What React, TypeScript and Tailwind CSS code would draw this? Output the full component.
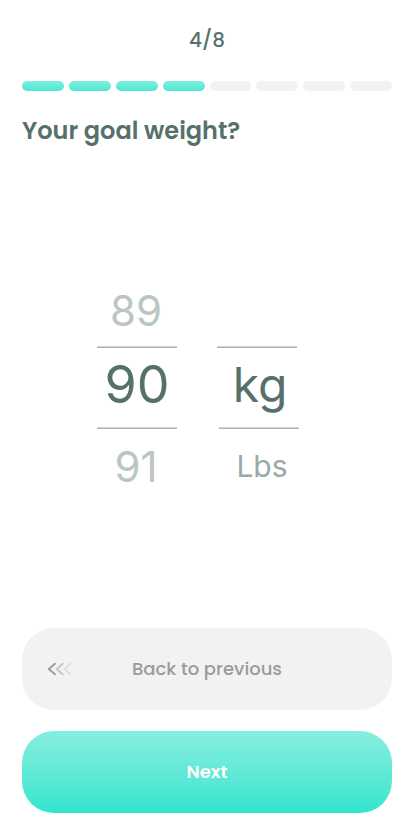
import { useState } from "react";

const TOTAL_STEPS = 8;
const CURRENT_STEP = 4;

function Progress() {
  return (
    <div
      role="progressbar"
      aria-label="Progress"
      aria-valuemin={0}
      aria-valuemax={TOTAL_STEPS}
      aria-valuenow={CURRENT_STEP}
      className="flex gap-[5px]"
    >
      {Array.from({ length: TOTAL_STEPS }, (_, i) => (
        <span
          key={i}
          className={
            i < CURRENT_STEP
              ? "h-2.5 flex-1 rounded-full bg-linear-to-b from-[#80efdf] to-[#4ce6d3]"
              : "h-2.5 flex-1 rounded-full bg-[#f2f2f2]"
          }
        />
      ))}
    </div>
  );
}

function Divider({ className = "" }: { className?: string }) {
  return (
    <div className={`h-0.5 w-20 border-t border-t-[#d2d2d2] bg-[#b3b3b3] ${className}`} />
  );
}

function BackChevrons() {
  return (
    <svg
      width="26"
      height="14"
      viewBox="0 0 26 14"
      fill="none"
      strokeWidth="1.8"
      strokeLinecap="round"
      strokeLinejoin="round"
      aria-hidden="true"
    >
      <path d="M8 1.7 1.8 7 8 12.3" stroke="#9b9b9b" />
      <path d="M15.7 1.7 9.8 7l5.9 5.3" stroke="#c3c3c3" />
      <path d="M23.5 1.7 17.6 7l5.9 5.3" stroke="#dddddd" />
    </svg>
  );
}

export default function App() {
  const [weight, setWeight] = useState(90);
  const [unit, setUnit] = useState("kg");
  const otherUnit = unit === "kg" ? "Lbs" : "kg";

  return (
    <main className="flex min-h-screen flex-col bg-white px-[22px] pt-6 pb-[27px] font-[Poppins,Inter,sans-serif] text-[#56716b]">
      <p className="text-center text-xl leading-8 font-medium">
        {CURRENT_STEP}/{TOTAL_STEPS}
      </p>
      <div className="pt-[25px] pb-6">
        <Progress />
      </div>
      <h1 className="text-2xl leading-8 font-semibold">Your goal weight?</h1>

      <section
        aria-label="Goal weight"
        className="flex flex-1 items-center justify-center gap-10 pr-[18px] font-[Inter,sans-serif]"
      >
        <div className="flex w-20 flex-col items-center">
          <button
            type="button"
            onClick={() => setWeight(weight - 1)}
            className="h-[72px] w-20 pr-0.5 text-[42px] leading-[74px] text-[#bbc6c3]"
          >
            {weight - 1}
          </button>
          <Divider />
          <output className="h-[79px] text-[52px] leading-[74px]">{weight}</output>
          <Divider />
          <button
            type="button"
            onClick={() => setWeight(weight + 1)}
            className="h-[72px] w-20 pr-0.5 text-[42px] leading-[76px] text-[#bbc6c3]"
          >
            {weight + 1}
          </button>
        </div>

        <div className="flex w-[82px] flex-col items-center">
          <div className="h-[72px]" />
          <Divider className="self-start" />
          <output className="h-[79px] pl-1 text-5xl leading-[74px]">{unit}</output>
          <Divider className="self-end" />
          <button
            type="button"
            onClick={() => setUnit(otherUnit)}
            className="h-[72px] w-full pl-2 text-3xl leading-[74px] text-[#9aaaa6]"
          >
            {otherUnit}
          </button>
        </div>
      </section>

      <div className="flex flex-col gap-[21px]">
        <button
          type="button"
          className="grid h-[82px] grid-cols-[1fr_auto_1fr] items-center rounded-[32px] bg-[#f2f2f2] px-[25px] text-lg font-medium text-[#9b9b9b]"
        >
          <BackChevrons />
          <span>Back to previous</span>
        </button>
        <button
          type="button"
          className="h-[82px] rounded-[32px] bg-linear-to-b from-[#84eedf] to-[#2ee5cd] text-lg font-semibold text-white"
        >
          Next
        </button>
      </div>
    </main>
  );
}
